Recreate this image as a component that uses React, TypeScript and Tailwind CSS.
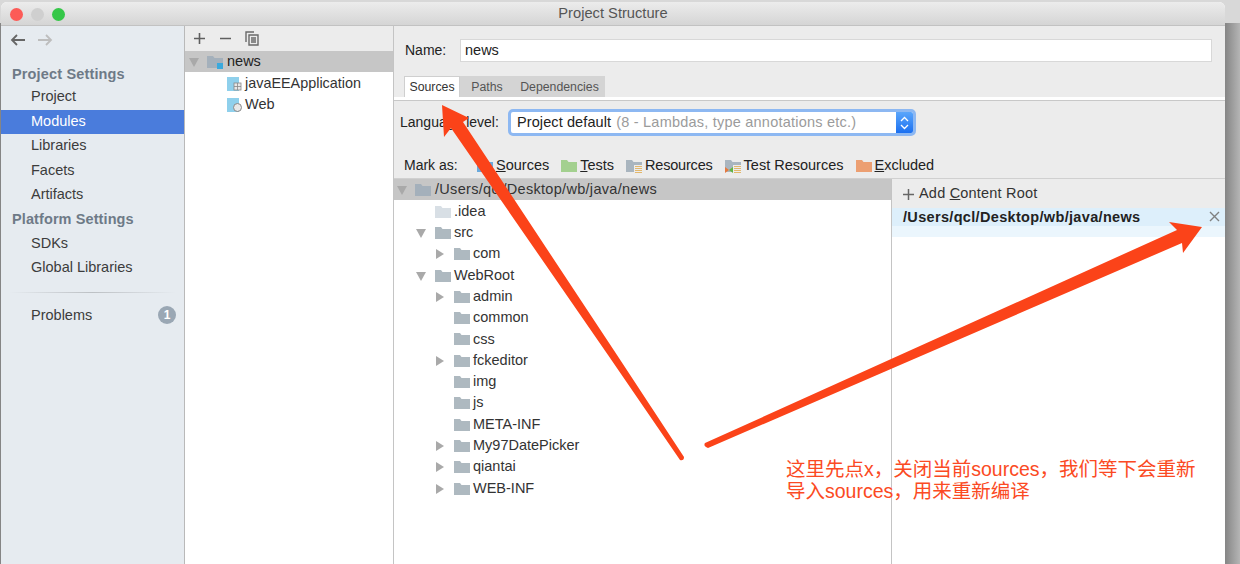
const font = "font-['Liberation_Sans','Noto_Sans_CJK_SC',sans-serif]";

const Folder = ({ color = "#aeb9c0", badge }: { color?: string; badge?: string }) => (
  <svg width="16" height="14" viewBox="0 0 16 14" className="shrink-0">
    <path d="M0 1h6l1.5 2H16v10H0z" fill={color} />
    {badge && <rect x="10" y="8" width="6" height="6" fill={badge} />}
  </svg>
);

const Toggle = ({ open }: { open?: boolean }) => (
  <svg width="10" height="10" viewBox="0 0 10 10" className="shrink-0">
    {open ? <path d="M0 1h10L5 10z" fill="#a9a9a9" /> : <path d="M1 0l8 5-8 5z" fill="#a9a9a9" />}
  </svg>
);

type Row = { name: string; depth: number; toggle?: "open" | "closed"; light?: boolean };

const tree: Row[] = [
  { name: ".idea", depth: 1, light: true },
  { name: "src", depth: 1, toggle: "open" },
  { name: "com", depth: 2, toggle: "closed" },
  { name: "WebRoot", depth: 1, toggle: "open" },
  { name: "admin", depth: 2, toggle: "closed" },
  { name: "common", depth: 2 },
  { name: "css", depth: 2 },
  { name: "fckeditor", depth: 2, toggle: "closed" },
  { name: "img", depth: 2 },
  { name: "js", depth: 2 },
  { name: "META-INF", depth: 2 },
  { name: "My97DatePicker", depth: 2, toggle: "closed" },
  { name: "qiantai", depth: 2, toggle: "closed" },
  { name: "WEB-INF", depth: 2, toggle: "closed" },
];

const NavItem = ({ label, active }: { label: string; active?: boolean }) => (
  <div
    className={
      "h-[24.5px] pl-[30px] flex items-center text-[14.5px] " +
      (active ? "bg-[#4a7cdc] text-white" : "text-[#3c3c3c]")
    }
  >
    {label}
  </div>
);

const MarkAs = ({ color, first, rest, lines, test }: { color: string; first?: string; rest: string; lines?: boolean; test?: boolean }) => (
  <div className="flex items-center gap-[3px]">
    <svg width="16" height="14" viewBox="0 0 16 14" className="shrink-0">
      <path d="M0 1h6l1.5 2H16v10H0z" fill={color} />
      {lines && <rect x="8" y="6" width="8" height="8" fill="#ececec" />}
      {lines && <path d="M9 7.5h7M9 9.5h7M9 11.5h7M9 13.5h7" stroke="#e3b76c" strokeWidth="1.1" />}
      {test && <path d="M0 8l4 3-4 3z" fill="#e5793f" />}
      {test && <path d="M8 8l-4 3 4 3z" fill="#62b543" />}
    </svg>
    <span className={lines && !test ? "tracking-[-0.2px]" : ""}>
      {first && <span className="underline">{first}</span>}
      {rest}
    </span>
  </div>
);

export default function App() {
  return (
    <div className={"relative w-[1240px] h-[564px] overflow-hidden bg-[linear-gradient(#d8d8d8_23px,transparent_23px),linear-gradient(to_right,#858585_1225px,#b5b5b5_1240px)] pt-[2px] pl-[1px] " + font}>
      <div className="w-[1224px] h-[562px] flex flex-col rounded-t-[6px] overflow-hidden bg-white">
        {/* title bar */}
        <div className="relative h-[24px] shrink-0 flex items-center justify-center bg-gradient-to-b from-[#ececec] to-[#d5d5d5] border-b border-[#c2c2c2] text-[14.7px] text-[#555]">
          <div className="absolute left-[9px] top-[6px] flex gap-[8px]">
            <div className="w-[13px] h-[13px] rounded-full bg-[#fc5b57]" />
            <div className="w-[13px] h-[13px] rounded-full bg-[#cfcfcf]" />
            <div className="w-[13px] h-[13px] rounded-full bg-[#35c748]" />
          </div>
          Project Structure
        </div>

        <div className="flex flex-1 min-h-0">
          {/* sidebar */}
          <div className="w-[184px] shrink-0 bg-[#e6ebf0] border-r border-[#b9b9b9]">
            <div className="h-[28px] pl-[9px] flex items-center gap-[13px]">
              <svg width="15" height="14" viewBox="0 0 15 14" fill="none" stroke="#666" strokeWidth="1.8">
                <path d="M15 7H2M7 2L2 7l5 5" />
              </svg>
              <svg width="15" height="14" viewBox="0 0 15 14" fill="none" stroke="#bdbdbd" strokeWidth="1.8">
                <path d="M0 7h13M8 2l5 5-5 5" />
              </svg>
            </div>
            <div className="mt-[10px] h-[21px] pl-[11px] flex items-center text-[14.5px] tracking-[0.15px] font-bold text-[#6e7a87]">Project Settings</div>
            <NavItem label="Project" />
            <NavItem label="Modules" active />
            <NavItem label="Libraries" />
            <NavItem label="Facets" />
            <NavItem label="Artifacts" />
            <div className="mt-[1px] h-[23px] pl-[11px] flex items-center text-[14.5px] tracking-[0.1px] font-bold text-[#6e7a87]">Platform Settings</div>
            <NavItem label="SDKs" />
            <NavItem label="Global Libraries" />
            <div className="mx-[8px] mt-[11px] h-[1px] bg-gradient-to-r from-transparent via-[#bcc0c4] to-transparent" />
            <div className="mt-[11px] h-[24px] pl-[30px] pr-[8px] flex items-center justify-between text-[14.5px] text-[#3c3c3c]">
              Problems
              <div className="w-[18px] h-[18px] -mt-[1px] rounded-full bg-[#9aa7b4] text-white text-[12px] font-bold flex items-center justify-center">1</div>
            </div>
          </div>

          {/* modules list */}
          <div className="w-[209px] shrink-0 bg-white border-r border-[#c4c4c4]">
            <div className="h-[25px] bg-[#ececec] pl-[8px] flex items-center gap-[13px]">
              <svg width="13" height="13" viewBox="0 0 13 13" stroke="#5f5f5f" strokeWidth="1.6">
                <path d="M6.5 1v11M1 6.5h11" />
              </svg>
              <svg width="13" height="13" viewBox="0 0 13 13" stroke="#5f5f5f" strokeWidth="1.6">
                <path d="M1 6.5h11" />
              </svg>
              <svg width="14" height="15" viewBox="0 0 14 15" fill="none" stroke="#6a6a6a" strokeWidth="1.4">
                <path d="M1 11V1h8" />
                <path d="M4 4h9v10H4zM6 7h5M6 9h5M6 11h5" />
              </svg>
            </div>
            <div className="h-[21px] pt-[1px] bg-[#c6c6c6] pl-[4px] flex items-center text-[14.5px] text-[#222]">
              <Toggle open />
              <div className="ml-[8px] mr-[4px]">
                <Folder color="#a4b0bb" badge="#3aa9dd" />
              </div>
              news
            </div>
            <div className="mt-[1px] h-[21px] pl-[42px] flex items-center gap-[3px] text-[14.4px] text-[#333]">
              <svg width="15" height="15" viewBox="0 0 15 15" className="shrink-0">
                <path d="M0 1h12v14H0z" fill="#8fd0ec" />
                <rect x="7" y="7" width="7" height="7" fill="#e8e8e8" stroke="#888" strokeWidth="0.8" />
                <path d="M7 10.5h7M10.5 7v7" stroke="#888" strokeWidth="0.8" />
              </svg>
              javaEEApplication
            </div>
            <div className="h-[21px] pl-[42px] flex items-center gap-[3px] text-[14.5px] text-[#333]">
              <svg width="15" height="15" viewBox="0 0 15 15" className="shrink-0">
                <path d="M0 1h12v14H0z" fill="#8fd0ec" />
                <circle cx="10.5" cy="10.5" r="4" fill="#e8e8e8" stroke="#888" strokeWidth="1" />
              </svg>
              Web
            </div>
          </div>

          {/* module details */}
          <div className="flex-1 min-w-0 flex flex-col bg-[#ececec] text-[14.5px] text-[#222]">
            <div className="pt-[13px] pl-[11px] pr-[13px] flex items-center">
              <span className="w-[55px] text-[14px]">Name:</span>
              <div className="flex-1 h-[23px] pl-[4px] flex items-center bg-white border border-[#d8d8d8]">news</div>
            </div>

            <div className="mt-[14px] pl-[10px] h-[24px] flex items-end border-b-[3px] border-b-white shadow-[0_1px_0_#c8c8c8] text-[12.3px]">
              <div className="h-[21px] pt-[1px] w-[56px] bg-white border-x border-t border-[#cfcfcf] flex items-center justify-center text-[#333]">Sources</div>
              <div className="h-[21px] pt-[1px] w-[54px] bg-[#d4d4d4] flex items-center justify-center text-[#555]">Paths</div>
              <div className="h-[21px] pt-[1px] w-[91px] bg-[#d4d4d4] flex items-center justify-center text-[#555]">Dependencies</div>
            </div>

            <div className="mt-[9px] pl-[6px] flex items-center">
              <span className="w-[108px] text-[14px]">Language level:</span>
              <div className="w-[408px] h-[27px] flex rounded-[5px] bg-white border-[3px] border-[#8db8f2] overflow-hidden">
                <div className="flex-1 pl-[6px] flex items-center text-[#222] tracking-[0.1px]">
                  Project default
                  <span className="ml-[5px] text-[#9b9b9b] tracking-[0.22px]">(8 - Lambdas, type annotations etc.)</span>
                </div>
                <div className="w-[17px] bg-gradient-to-b from-[#5aa6fb] to-[#1a6ff0] flex items-center justify-center">
                  <svg width="9" height="14" viewBox="0 0 9 14" fill="none" stroke="white" strokeWidth="1.3">
                    <path d="M1 5l3.5-3.5L8 5M1 9l3.5 3.5L8 9" />
                  </svg>
                </div>
              </div>
            </div>

            <div className="mt-[19px] mb-[1px] pl-[10px] h-[22px] flex items-center">
              <span className="w-[73px] text-[14px] -mt-[1px]">Mark as:</span>
              <div className="flex items-center gap-[12px]">
                <MarkAs color="#6aa9dc" first="S" rest="ources" />
                <MarkAs color="#a3d08f" first="T" rest="ests" />
                <MarkAs color="#a9b5bf" rest="Resources" lines />
                <MarkAs color="#a9b5bf" rest="Test Resources" lines test />
                <MarkAs color="#ec9f72" first="E" rest="xcluded" />
              </div>
            </div>

            <div className="flex-1 min-h-0 flex border-t border-[#d0d0d0]">
              {/* source tree */}
              <div className="w-[498px] shrink-0 bg-white border-r border-[#c4c4c4]">
                <div className="h-[21px] mb-[1px] bg-[#c6c6c6] pl-[3px] flex items-center text-[#333]">
                  <Toggle open />
                  <div className="ml-[8px] mr-[4px]">
                    <Folder color="#a4b0bb" />
                  </div>
                  <span className="tracking-[0.3px]">/Users/qcl/Desktop/wb/java/news</span>
                </div>
                {tree.map((row) => (
                  <div key={row.name} className="h-[21.3px] flex items-center text-[#333]">
                    <div className={row.depth === 1 ? "w-[22px] shrink-0" : "w-[41px] shrink-0"} />
                    <div className="w-[19px] shrink-0">
                      {row.toggle && <Toggle open={row.toggle === "open"} />}
                    </div>
                    <div className="mr-[3px]">
                      <Folder color={row.light ? "#d8dfe5" : undefined} />
                    </div>
                    {row.name}
                  </div>
                ))}
              </div>

              {/* content roots */}
              <div className="flex-1 min-w-0 bg-white">
                <div className="h-[29px] pt-[1px] bg-[#ececec] pl-[10px] flex items-center gap-[4px] text-[#333]">
                  <svg width="13" height="13" viewBox="0 0 13 13" stroke="#666" strokeWidth="1.5">
                    <path d="M6.5 1v11M1 6.5h11" />
                  </svg>
                  <span className="tracking-[0.2px]">
                    Add <span className="underline">C</span>ontent Root
                  </span>
                </div>
                <div className="h-[18px] pt-[1px] bg-[#ddeffb] pl-[11px] pr-[5px] flex items-center justify-between font-bold text-[#222]">
                  <span className="tracking-[0.33px]">/Users/qcl/Desktop/wb/java/news</span>
                  <svg width="11" height="11" viewBox="0 0 11 11" stroke="#808080" strokeWidth="1.4" className="-mt-[3px]">
                    <path d="M1 1l9 9M10 1l-9 9" />
                  </svg>
                </div>
                <div className="h-[11px] bg-[#ebf6fd]" />
              </div>
            </div>
          </div>
        </div>
      </div>

      {/* annotation arrows */}
      <svg className="absolute left-0 top-0 pointer-events-none" width="1240" height="564" viewBox="0 0 1240 564">
        <path d="M442 105L469 118L463 122L617 355L684 457Q684 461 680 460L608 355L451 128L444 137z" fill="#fb4319" />
        <path d="M1202 227L1183 253L1182 243L708 448Q703 446 705 443L1177 230L1169 222z" fill="#fb4319" />
      </svg>
      <div className="absolute left-[786px] top-[458px] text-[19.5px] leading-[22px] whitespace-nowrap text-[#fb4a23]">
        这里先点x，关闭当前sources，我们等下会重新
        <br />
        导入sources，用来重新编译
      </div>
    </div>
  );
}
